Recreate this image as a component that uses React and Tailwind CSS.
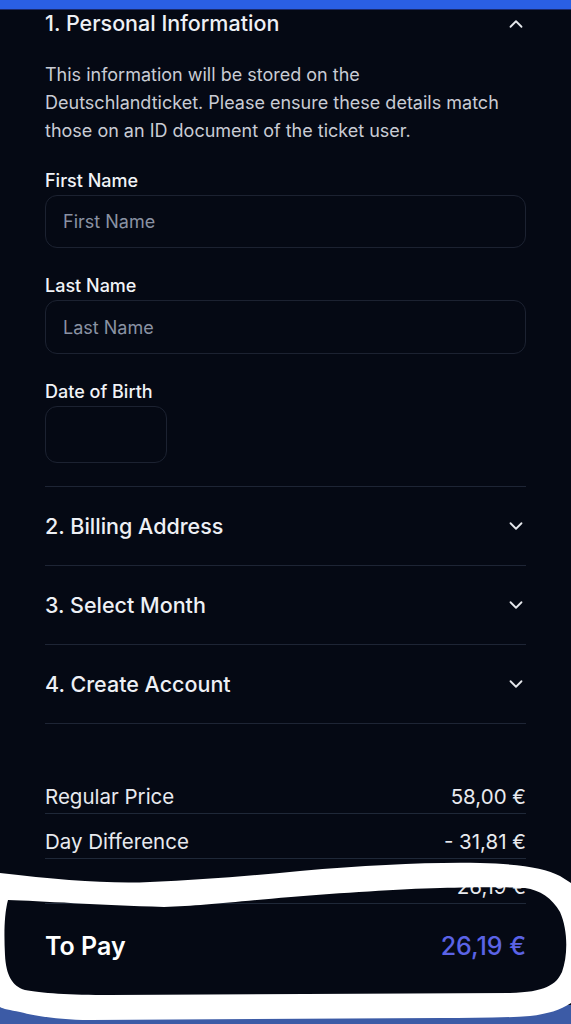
import React from 'react';
import { ChevronUp, ChevronDown } from 'lucide-react';

const sections = ['2. Billing Address', '3. Select Month', '4. Create Account'];

// third label sits under the marker stroke in the screenshot
const prices = [
  { label: 'Regular Price', value: '58,00 €' },
  { label: '\u00a0', value: '- 31,81 €', realLabel: 'Day Difference' },
  { label: '\u00a0', value: '26,19 €' },
];

const Field = ({ label, placeholder, className = '' }) => (
  <div className="flex flex-col">
    <label className="text-[18px] leading-[24px] font-medium text-[#f1f3f7]">{label}</label>
    <input
      placeholder={placeholder}
      className={`mt-[2px] rounded-[12px] border border-[#1c2231] bg-transparent px-[17px] text-[18px] text-white placeholder:text-[#8a92a3] outline-none ${className}`}
    />
  </div>
);

const App = () => {
  return (
    <div
      className="relative flex h-[1024px] w-full flex-col overflow-hidden bg-[#050914]"
      style={{ fontFamily: 'Inter, "Noto Sans", sans-serif' }}
    >
      <div className="h-[10px] shrink-0 border-b border-[#1b2a6b] bg-[#2a5fe3]" />

      <div className="flex flex-1 flex-col px-[45px]">
        <div className="flex h-[27px] items-center justify-between">
          <h2 className="text-[21.5px] font-medium text-[#eef0f5]">1. Personal Information</h2>
          <ChevronUp size={22} strokeWidth={2} className="-mr-[1px] text-[#e5e7eb]" />
        </div>

        <p className="mt-[24px] text-[18px] leading-[28px] text-[#c9ccd4]">
          This information will be stored on the
          <br />
          Deutschlandticket. Please ensure these details match
          <br />
          those on an ID document of the ticket user.
        </p>

        <div className="mt-[24px] flex flex-col gap-[26px]">
          <Field label="First Name" placeholder="First Name" className="h-[53px] w-full" />
          <Field label="Last Name" placeholder="Last Name" className="h-[54px] w-full" />
          <Field label="Date of Birth" placeholder="" className="h-[57px] w-[122px]" />
        </div>

        <div className="mt-[23px] border-t border-[#1e2535]">
          {sections.map((s) => (
            <div key={s} className="flex h-[79px] items-center justify-between border-b border-[#1e2535]">
              <span className="text-[21.5px] font-medium text-[#eef0f5]">{s}</span>
              <ChevronDown size={22} strokeWidth={2} className="-mr-[1px] text-[#e5e7eb]" />
            </div>
          ))}
        </div>

        <div className="mt-[45px] flex flex-col">
          {prices.map((p, i) => (
            <div
              key={i}
              className="flex items-center justify-between border-b border-[#1f2838] pt-[14px] pb-[2px] text-[20.5px] leading-[28px] text-[#e8eaef]"
            >
              <span>{p.realLabel || p.label}</span>
              <span>{p.value}</span>
            </div>
          ))}
          <div className="flex items-center justify-between pt-[27px] text-[25px] leading-[30px] font-semibold">
            <span className="text-white">To Pay</span>
            <span className="font-medium text-[#5b63e6]">26,19 €</span>
          </div>
        </div>
      </div>

      <div className="h-[19px] shrink-0 bg-[#3c5ba6]" />

      {/* marker scribble over the totals */}
      <svg
        className="pointer-events-none absolute inset-0"
        width="571"
        height="1024"
        viewBox="0 0 571 1024"
      >
        <path
          fill="#ffffff"
          fillRule="evenodd"
          d="M0 873 C60 880 110 884 150 882 C200 880 250 876 300 871 C370 865 430 862 480 863 C520 864 545 868 560 876 L571 883 L571 1003 C560 1010 548 1014 530 1016 C500 1018 470 1018 440 1018 L90 1020 C60 1020 35 1016 20 1012 C10 1010 3 1009 0 1007 Z
             M8 900 C40 901 100 905 164 907 C200 906 230 902 291 897 C340 893 400 889 440 888 C480 887 510 887 525 888 C540 890 552 898 560 912 C568 930 568 955 562 972 C556 985 545 992 510 993 L110 995 C70 995 40 993 25 990 C12 986 6 975 5 955 C4 935 4 915 8 900 Z"
        />
      </svg>
    </div>
  );
};

export default App;
